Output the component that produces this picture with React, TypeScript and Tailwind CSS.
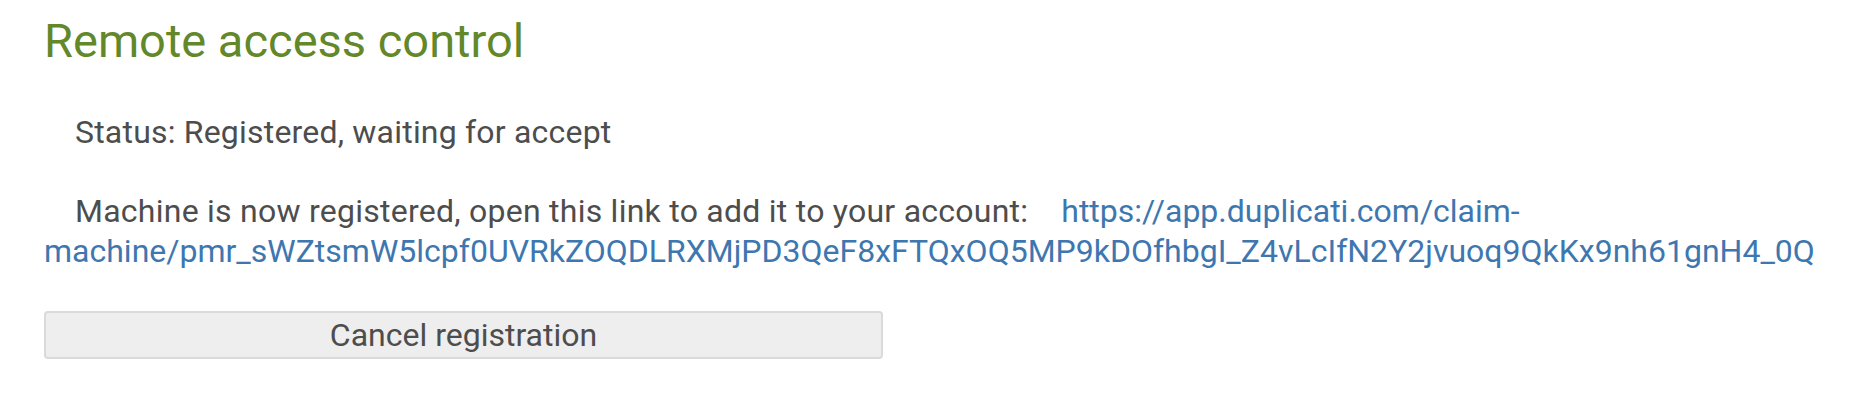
import React from "react";

const claimUrl =
  "https://app.duplicati.com/claim-machine/pmr_sWZtsmW5lcpf0UVRkZOQDLRXMjPD3QeF8xFTQxOQ5MP9kDOfhbgI_Z4vLcIfN2Y2jvuoq9QkKx9nh61gnH4_0Q";

export default function App() {
  return (
    <div className="min-h-[400px] bg-white pl-[44px] pr-[20px] font-['Roboto','Liberation_Sans',sans-serif]">
      {/* Title */}
      <h1 className="pt-[13px] text-[47px] leading-[56px] font-normal text-[#62882a]">
        Remote access control
      </h1>

      {/* Status */}
      <p className="mt-[43px] indent-[31px] text-[32px] leading-[40px] tracking-[0.2px] text-[#4d4d4d]">
        Status: Registered, waiting for accept
      </p>

      {/* Claim link */}
      <p className="mt-[39px] indent-[31px] text-[32px] leading-[40px] text-[#4d4d4d]">
        <span className="mr-[25px] tracking-[0.25px]">
          Machine is now registered, open this link to add it to your account:
        </span>{" "}
        <a href={claimUrl} className="text-[#3e77b0] no-underline">
          {claimUrl}
        </a>
      </p>

      <button
        type="button"
        className="mt-[40px] block h-[48px] w-[839px] rounded-[4px] border-2 border-[#dadada] bg-[#eeeeee] text-[32px] leading-[44px] text-[#4d4d4d]"
      >
        Cancel registration
      </button>
    </div>
  );
}
